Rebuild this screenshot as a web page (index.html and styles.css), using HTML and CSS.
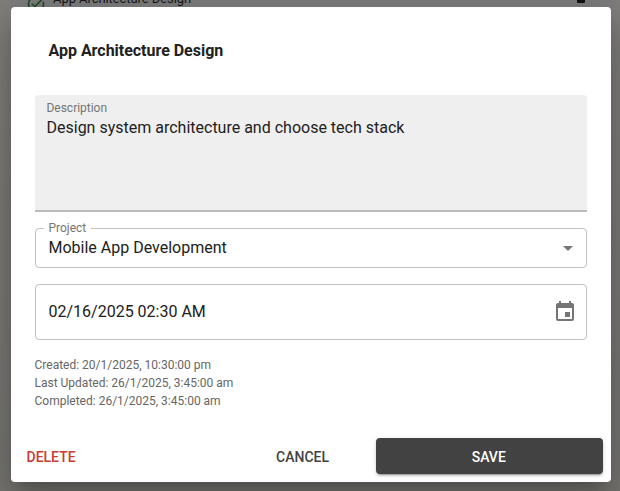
FILE: index.html
```html
<!DOCTYPE html>
<html lang="en">
<head>
<meta charset="utf-8">
<title>App Architecture Design</title>
<link rel="stylesheet" href="styles.css">
</head>
<body>
<div class="task-row">
  <svg class="check" width="20" height="20" viewBox="0 0 24 24"><path d="M22 5.18 10.59 16.6l-4.24-4.24 1.41-1.41 2.83 2.83 10-10zM19.79 10.22c.13.57.21 1.17.21 1.78 0 4.42-3.58 8-8 8s-8-3.58-8-8 3.58-8 8-8c1.58 0 3.04.46 4.28 1.25l1.44-1.44C16.1 2.67 14.13 2 12 2 6.48 2 2 6.48 2 12s4.480 10 10 10 10-4.480 10-10c0-1.190-.22-2.330-.6-3.390z"/></svg>
  <span class="task-name">App Architecture Design</span>
  <span class="trash"></span>
</div>
<main class="dialog">
  <h2 class="title">App Architecture Design</h2>
  <div class="content">
    <div class="filled">
      <label>Description</label>
      <p>Design system architecture and choose tech stack</p>
    </div>
    <fieldset class="outlined project">
      <legend>Project</legend>
      <span class="value">Mobile App Development</span>
      <svg class="arrow" width="24" height="24" viewBox="0 0 24 24"><path d="m7 10 5 5 5-5z"/></svg>
    </fieldset>
    <div class="outlined date">
      <span class="value">02/16/2025 02:30 AM</span>
      <svg class="calendar" width="24" height="24" viewBox="0 0 24 24"><path d="M17 12h-5v5h5zM16 1v2H8V1H6v2H5c-1.110 0-1.990.9-1.990 2L3 19c0 1.100.89 2 2 2h14c1.100 0 2-.9 2-2V5c0-1.100-.9-2-2-2h-1V1zm3 18H5V8h14z"/></svg>
    </div>
    <div class="meta">
      <span>Created: 20/1/2025, 10:30:00 pm</span>
      <span>Last Updated: 26/1/2025, 3:45:00 am</span>
      <span>Completed: 26/1/2025, 3:45:00 am</span>
    </div>
  </div>
  <div class="actions">
    <button class="delete">DELETE</button>
    <button class="cancel">CANCEL</button>
    <button class="save">SAVE</button>
  </div>
</main>
</body>
</html>
```
FILE: styles.css
```css
* { box-sizing: border-box; }
body {
  margin: 0;
  height: 491px;
  padding: 7px 9px 9px 11px;
  overflow: hidden;
  position: relative;
  background: linear-gradient(#807f7b, #777672);
  font-family: Roboto, "Liberation Sans", sans-serif;
  color: #212121;
}
.task-row {
  position: absolute;
  top: -15px;
  left: 11px;
  width: 600px;
  height: 60px;
  background: #7d7d7d;
}
.check { position: absolute; left: 14.500px; top: 9px; fill: #234c25; }
.task-name {
  position: absolute;
  left: 42px;
  top: 6px;
  font-size: 13px;
  line-height: 16px;
  letter-spacing: -.07px;
  color: #171717;
}
.trash {
  position: absolute;
  left: 566px;
  top: 6px;
  width: 8px;
  height: 12px;
  border-radius: 0 0 1px 1px;
  background: #111;
}
.dialog {
  position: relative;
  display: flex;
  flex-direction: column;
  width: 600px;
  height: 475px;
  background: #fff;
  border-radius: 4px;
  box-shadow: 0 11px 15px -7px rgba(0,0,0,.2), 0 24px 38px 3px rgba(0,0,0,.14), 0 9px 46px 8px rgba(0,0,0,.12);
}
.title {
  margin: 0;
  padding: 32px 37.5px 0;
  height: 88px;
  font-size: 16px;
  line-height: 24px;
  font-weight: 700;
  letter-spacing: -.02px;
}
.content {
  display: flex;
  flex-direction: column;
  padding: 0 24px;
}
.filled {
  height: 117px;
  padding: 6px 11.5px;
  background: #efefef;
  border-bottom: 2px solid #bcbcbc;
  border-radius: 4px 4px 0 0;
}
.filled label {
  display: block;
  font-size: 12px;
  line-height: 14px;
  letter-spacing: -.02px;
  color: #757575;
}
.filled p {
  margin: 1px 0 0;
  font-size: 16px;
  line-height: 24px;
}
.outlined {
  display: flex;
  align-items: center;
  justify-content: space-between;
  margin: 0;
  border: 1px solid #c1c1c1;
  border-radius: 4px;
}
.outlined svg { fill: #757575; }
.value { font-size: 16px; line-height: 24px; }
.project {
  height: 47px;
  margin-top: 9px;
  padding: 0 6px 3px 8px;
}
.project legend {
  padding: 0 4.500px;
  font-size: 12px;
  line-height: 14px;
  letter-spacing: -.02px;
  color: #757575;
}
.project .value { margin-left: 4.500px; padding-top: 1px; }
.date { height: 56px; margin-top: 16px; padding: 0 9px 0 12.500px; }
.meta {
  display: flex;
  flex-direction: column;
  margin: 16px 0 0 -.5px;
  font-size: 12px;
  line-height: 18px;
  color: #666;
}
.actions {
  display: flex;
  align-items: center;
  margin-top: auto;
  padding: 8px;
}
.actions button {
  border: 0;
  padding: 1px 7.500px 0;
  height: 36px;
  border-radius: 4px;
  background: transparent;
  font: 500 14px/24px Roboto, "Liberation Sans", sans-serif;
  letter-spacing: 0;
  color: #424242;
}
.actions .delete { color: #c93c32; }
.actions .cancel { margin-left: auto; margin-right: 39.500px; }
.actions .save {
  width: 227px;
  color: #fff;
  background: #424242;
  padding-right: 9px;
  box-shadow: 0 3px 1px -2px rgba(0,0,0,.2), 0 2px 2px rgba(0,0,0,.14), 0 1px 5px rgba(0,0,0,.12);
}
```
